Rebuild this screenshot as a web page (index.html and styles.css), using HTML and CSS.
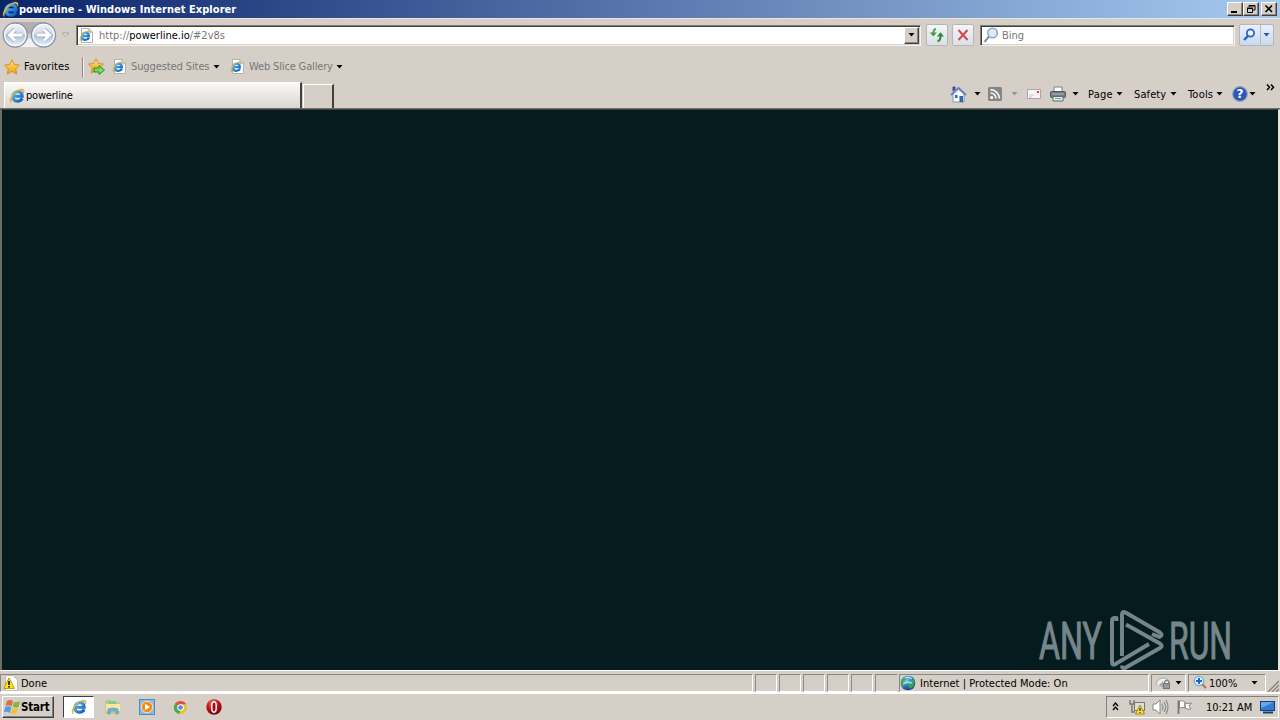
FILE: index.html
```html
<!DOCTYPE html>
<html lang="en">
<head>
<meta charset="utf-8">
<title>powerline - Windows Internet Explorer</title>
<link rel="stylesheet" href="styles.css">
</head>
<body>
<svg class="defs" width="0" height="0">
  <defs>
    <linearGradient id="blue" x1="0" y1="0" x2="1" y2="1"><stop offset="0" stop-color="#5cc0f8"/><stop offset="1" stop-color="#0f58b8"/></linearGradient>
    <linearGradient id="orb" x1="0" y1="0" x2="0" y2="1"><stop offset="0" stop-color="#f4f6fa"/><stop offset=".45" stop-color="#d3dae5"/><stop offset=".52" stop-color="#b3c2d8"/><stop offset="1" stop-color="#eef6fd"/></linearGradient>
    <radialGradient id="globe" cx=".35" cy=".3" r=".8"><stop offset="0" stop-color="#8fd4f4"/><stop offset=".5" stop-color="#2a78c4"/><stop offset="1" stop-color="#0c2f78"/></radialGradient>
    <radialGradient id="red" cx=".4" cy=".25" r=".8"><stop offset="0" stop-color="#f06a60"/><stop offset=".5" stop-color="#c01414"/><stop offset="1" stop-color="#6c0404"/></radialGradient>
    <linearGradient id="gold" x1="0" y1="0" x2="0" y2="1"><stop offset="0" stop-color="#ffe878"/><stop offset="1" stop-color="#f09a10"/></linearGradient>
  </defs>
  <symbol id="ie" viewBox="0 0 16 16">
    <path d="M13.2 10.4Q11.8 13.3 8.400 13.3Q4 13 3.800 8.800Q4.200 4.100 8.800 3.500Q13 3.700 13.2 8.300H5" fill="none" stroke="url(#blue)" stroke-width="3"/>
    <path d="M2.3 14.8C-1 13.6 2.2 5.8 8 2.6C11.8 .4 15.4 .4 15.2 3.4C15.1 4.2 14.8 4.8 14.4 5.4C14.6 2.2 12.2 1.9 9 3.1C4.6 5.4 1.6 11.6 2.3 14.8Z" fill="#e6c33f" stroke="#b9932a" stroke-width=".3"/>
  </symbol>
  <symbol id="iepage" viewBox="0 0 14 15">
    <path d="M2.5 .5H10L13.5 4V14.5H2.5Z" fill="#fff" stroke="#b0b0b0"/><path d="M10 .5V4H13.5" fill="#e4e4e4" stroke="#a8a8a8"/>
    <svg x="0" y="2" width="12" height="12"><use href="#ie"/></svg>
  </symbol>
  <symbol id="star" viewBox="0 0 16 16"><path d="M8 .7L10.3 5.4L15.5 6.1L11.7 9.7L12.7 15L8 12.4L3.3 15L4.3 9.7L.5 6.1L5.7 5.4Z" fill="url(#gold)" stroke="#d88a18" stroke-width=".9" stroke-linejoin="round"/></symbol>
  <symbol id="down" viewBox="0 0 7 4"><path d="M.5 0H6.5L3.5 3.5Z" fill="currentColor"/></symbol>
</svg>

<header class="titlebar">
  <svg class="title-icon"><use href="#ie"/></svg>
  <span class="title-text">powerline - Windows Internet Explorer</span>
  <div class="window-buttons">
    <span class="winbtn"><svg width="12" height="10"><path d="M2 8H8" stroke="#000" stroke-width="2"/></svg></span>
    <span class="winbtn"><svg width="12" height="10"><path d="M4 1.5H10V6H8M4 1.5V3M4 2H10M2.5 4.5H7.5V8.5H2.5ZM2 4H8" fill="none" stroke="#000"/></svg></span>
    <span class="winbtn close"><svg width="12" height="10"><path d="M2.5 1.5L9 8M9 1.5L2.5 8" stroke="#000" stroke-width="1.6"/></svg></span>
  </div>
</header>

<nav class="address-row">
  <svg class="backforward" viewBox="0 0 58 28">
    <path d="M13 1H43L49 6L28 13L7 6Z" fill="#b3afb0"/>
    <path d="M9 26H47L29 17Z" fill="#f1f1f3"/>
    <circle cx="14.2" cy="14" r="12" fill="url(#orb)" stroke="#8695a9" stroke-width="1.4"/>
    <circle cx="42.5" cy="14" r="12" fill="url(#orb)" stroke="#8695a9" stroke-width="1.4"/>
    <circle cx="14.2" cy="14" r="10.6" fill="none" stroke="#f7fafd" stroke-width="1.2"/>
    <circle cx="42.5" cy="14" r="10.6" fill="none" stroke="#f7fafd" stroke-width="1.2"/>
    <path d="M14 8.5L8.5 14L14 19.5M9 14H21" fill="none" stroke="#9dafc8" stroke-width="4.6"/>
    <path d="M14 8.5L8.5 14L14 19.5M9 14H21" fill="none" stroke="#fff" stroke-width="3"/>
    <path d="M43 8.5L48.5 14L43 19.5M48 14H36" fill="none" stroke="#9dafc8" stroke-width="4.6"/>
    <path d="M43 8.5L48.5 14L43 19.5M48 14H36" fill="none" stroke="#fff" stroke-width="3"/>
  </svg>
  <svg class="history" viewBox="0 0 9 6"><path d="M1 1H8L4.5 4.5Z" fill="#dedbd5" stroke="#aaa7a2"/></svg>
  <div class="field address">
    <svg class="i14"><use href="#iepage"/></svg>
    <span class="url">http://<b>powerline.io</b>/#2v8s</span>
    <span class="combo"><svg class="arrow"><use href="#down"/></svg></span>
  </div>
  <span class="tool refresh"><svg width="16" height="16"><path d="M7 2Q4.3 2 4.3 7" fill="none" stroke="#4aa84c" stroke-width="2"/><path d="M.8 5.5H7.8L4.3 9.5Z" fill="#36a23a"/><path d="M8.5 14Q11.5 14 11.5 9" fill="none" stroke="#268b2d" stroke-width="2"/><path d="M8 9.5H15L11.5 5.3Z" fill="#268b2d"/></svg></span>
  <span class="tool stop"><svg width="16" height="16"><path d="M3.5 3L12.5 13M12.5 3L3.5 13" stroke="#cf4a4f" stroke-width="2"/></svg></span>
  <div class="field search">
    <svg width="16" height="16"><circle cx="9.5" cy="6" r="4.8" fill="#dceafa" stroke="#91a5c4" stroke-width="1.5"/><path d="M6 9.5L1.5 15" stroke="#8293ad" stroke-width="2"/></svg>
    <span class="hint">Bing</span>
  </div>
  <div class="tool searchgo">
    <svg width="18" height="16"><circle cx="10.5" cy="6" r="3.6" fill="#eaf4ff" stroke="#2b63cb" stroke-width="1.8"/><path d="M8 8.8L4 13" stroke="#2b63cb" stroke-width="2.4"/></svg>
    <i class="split"></i><svg class="arrow smallblue"><use href="#down"/></svg>
  </div>
</nav>

<nav class="favorites-row">
  <svg class="i16"><use href="#star"/></svg><span class="fav-label">Favorites</span>
  <i class="separator"></i>
  <svg class="addfav" viewBox="0 0 18 17"><svg width="16" height="16"><use href="#star"/></svg><path d="M6 10H11V7.5L16.5 12L11 16.5V14H6Z" fill="#75d85b" stroke="#26932b"/></svg>
  <svg class="i14"><use href="#iepage"/></svg><span class="suggested muted">Suggested Sites</span><svg class="arrow"><use href="#down"/></svg>
  <svg class="i14 slice"><use href="#iepage"/></svg><span class="gallery muted">Web Slice Gallery</span><svg class="arrow"><use href="#down"/></svg>
</nav>

<section class="tab-row">
  <div class="tab"><svg class="i16"><use href="#ie"/></svg><span class="tab-text">powerline</span></div>
  <div class="new-tab"></div>
  <div class="commands">
    <svg class="home" viewBox="0 0 17 17"><path d="M3 8V16H14V8L8.5 3Z" fill="#f4f8ff" stroke="#8295b8"/><path d="M3 5V1H5V4" fill="#405abd" stroke="#3347a0"/><path d="M1 9L8.5 2L16 9" fill="none" stroke="#6b7dc4" stroke-width="1.8"/><path d="M9.5 10H13V16H9.5Z" fill="#2e6d9e"/><path d="M5 9H7.5V12H5Z" fill="#3568ad"/></svg>
    <svg class="arrow a1"><use href="#down"/></svg>
    <svg class="rss" viewBox="0 0 14 14"><rect width="14" height="14" rx="1.5" fill="#858585"/><circle cx="3.7" cy="10.5" r="1.5" fill="#fff"/><path d="M2.5 6A5.5 5.5 0 0 1 8 11.5M2.5 2.7A9 9 0 0 1 11.4 11.5" fill="none" stroke="#f4f4f4" stroke-width="1.7"/></svg>
    <svg class="arrow a2"><use href="#down"/></svg>
    <svg class="mail" viewBox="0 0 14 10"><rect x=".5" y=".5" width="13" height="9" fill="#f7f5fa" stroke="#aaa5ae"/><path d="M2 6H7M2 8H5" stroke="#c5c2cd"/><path d="M10 2H12V4H10Z" fill="#cf3640"/></svg>
    <svg class="printer" viewBox="0 0 16 16"><path d="M4 1H12V7H4Z" fill="#fff" stroke="#7c8084"/><rect x=".5" y="5.5" width="15" height="6" rx="1" fill="#777b80" stroke="#54585d"/><path d="M2 8H14" stroke="#b7b9bb"/><path d="M3 10.5H13V15H3Z" fill="#e1eef0" stroke="#63676a"/><path d="M5 12.5H11" stroke="#65a8ac"/></svg>
    <svg class="arrow a3"><use href="#down"/></svg>
    <span class="page">Page</span><svg class="arrow"><use href="#down"/></svg>
    <span class="safety">Safety</span><svg class="arrow"><use href="#down"/></svg>
    <span class="tools">Tools</span><svg class="arrow"><use href="#down"/></svg>
    <svg class="help" viewBox="0 0 16 16"><circle cx="8" cy="8" r="7.3" fill="#2b57b6" stroke="#909bb5" stroke-width="1.2"/><text x="8" y="12.3" text-anchor="middle" class="question">?</text></svg><svg class="arrow a4"><use href="#down"/></svg>
    <svg class="chevron" viewBox="0 0 9 7"><path d="M1 .5L3.5 3.3L1 6M5 .5L7.5 3.3L5 6" fill="none" stroke="#000" stroke-width="1.5"/></svg>
  </div>
</section>

<main class="viewport">
  <svg class="watermark" viewBox="0 0 200 62">
    <g class="brand"><text x="3" y="50.5" textLength="63" lengthAdjust="spacingAndGlyphs">ANY</text><text x="133" y="50.5" textLength="63" lengthAdjust="spacingAndGlyphs">RUN</text></g>
    <g fill="none" stroke="#77868a" stroke-width="3.9" stroke-linejoin="round">
      <path d="M80.5 13V10H79Q76 10 76 13V54Q76 58 79.5 56L113 36"/>
      <path d="M86 48V6.5Q86 3 89.5 4.5L124 24.5Q127.5 27.5 123.5 29L116 26"/>
      <path d="M90 16.5L124 35.5Q127.5 38 124 40L89 60Q86 61.5 86 57.5"/>
    </g>
  </svg>
</main>

<footer class="statusbar">
  <div class="pane done"><svg class="warn" viewBox="0 0 15 16"><path d="M2.5 .5H10L14.5 5V15.5H2.5Z" fill="#fff" stroke="#bbb"/><path d="M6 3L.7 13.4H11.5Z" fill="#ffe51f" stroke="#c19700"/><path d="M6 6V10M6 11V12.5" stroke="#000" stroke-width="1.5"/></svg><span class="done-text">Done</span></div>
  <div class="pane mini"></div><div class="pane mini"></div><div class="pane mini"></div><div class="pane mini"></div><div class="pane mini"></div><div class="pane mini last"></div>
  <div class="pane zone"><svg class="i16" viewBox="0 0 16 16"><circle cx="8" cy="8" r="7.3" fill="url(#globe)"/><path d="M2 4Q6 0 8 2L6 5L3 7L5 9L4 13Q1 10 1 7ZM9 6L14 4Q16 8 13 12L10 14L8 10Z" fill="#3daa4d" opacity=".85"/><path d="M5 3Q9 1 12 4M3 9Q7 6 12 8" fill="none" stroke="#a6def4" stroke-width="1.4"/></svg><span class="zone-text">Internet | Protected Mode: On</span></div>
  <div class="pane privacy"><svg width="18" height="16"><path d="M1 10Q2 4 7 3Q12 2 14 8" fill="#eee" stroke="#a7a7a7"/><path d="M4 10L8 6V13Z" fill="#aaa"/><path d="M9.5 9V7Q12 3.5 14 7V9" fill="none" stroke="#808080" stroke-width="1.3"/><rect x="8.5" y="8.5" width="6" height="5" fill="#999" stroke="#777"/></svg><svg class="arrow"><use href="#down"/></svg></div>
  <div class="pane zoom"><svg width="16" height="16"><circle cx="6" cy="6" r="4.7" fill="#dff1ff" stroke="#78a9dc" stroke-width="1.3"/><path d="M6 3V9M3 6H9" stroke="#176ac2" stroke-width="2"/><path d="M9.5 9.5L13 13" stroke="#b77549" stroke-width="2.2"/></svg><span class="zoom-text">100%</span><svg class="arrow"><use href="#down"/></svg></div>
  <svg class="grip" viewBox="0 0 12 12"><path d="M1 12L12 1M5 12L12 5M9 12L12 9" stroke="#858078" stroke-width="1.3"/></svg>
</footer>

<footer class="taskbar">
  <button class="start"><svg width="17" height="16"><path d="M3 2Q6 0 9 2L7.5 7.5Q5 5.5 1.5 7Z" fill="#e7693e"/><path d="M10 3Q13 4 16 2L14.5 8Q12 9 8.8 7.5Z" fill="#7bb947"/><path d="M1.2 8Q5 6.5 7.3 8.5L5.8 14Q3 12 0 13Z" fill="#4b9fe5"/><path d="M8.5 8.8Q11.5 10.3 14.2 9L12.5 14.5Q9.5 15.5 7 14.3Z" fill="#f2bf37"/></svg><span class="start-text">Start</span></button>
  <div class="active-app"><svg class="i16"><use href="#ie"/></svg></div>
  <svg class="explorer" viewBox="0 0 16 16"><path d="M1 2H6L7 4H14V14H1Z" fill="#e7cc67" stroke="#d2b555"/><path d="M3 2H11V6H3Z" fill="#75cf9a"/><path d="M1 5H15V12H1Z" fill="#f7e7a0"/><path d="M3 15V10Q8 8 13 10V15H11V12H5V15Z" fill="#6db5e2" stroke="#5098c7" stroke-width=".7"/></svg>
  <svg class="media" viewBox="0 0 16 16"><rect x=".5" y=".5" width="15" height="15" fill="#8bbce8" stroke="#4c8bc6"/><circle cx="8" cy="8" r="5.6" fill="#f28c17" stroke="#fde0ad"/><path d="M6 4.8L11 8L6 11.2Z" fill="#fff"/></svg>
  <svg class="chrome" viewBox="0 0 16 16"><circle cx="8" cy="8" r="7" fill="#e7c633"/><path d="M8 8L2 4.3A7 7 0 0 1 14 4.5H8Z" fill="#dc5044"/><path d="M2 4.3L8 8L7 15A7 7 0 0 1 2 4.3Z" fill="#45a85a"/><circle cx="8" cy="8" r="3.5" fill="#fff"/><circle cx="8" cy="8" r="2.5" fill="#508cda"/></svg>
  <svg class="opera" viewBox="0 0 16 16"><circle cx="8" cy="8" r="7.7" fill="url(#red)"/><ellipse cx="8" cy="8" rx="2.3" ry="5.2" fill="#a50b12" stroke="#fff" stroke-width="1.5"/></svg>
  <div class="tray">
    <svg class="trayup" viewBox="0 0 7 9"><path d="M1 4L3.5 1L6 4M1 8L3.5 5L6 8" fill="none" stroke="#000" stroke-width="1.3"/></svg>
    <svg class="network" viewBox="0 0 17 16"><path d="M1 1V5H5V1M3 5V13H6" fill="none" stroke="#777" stroke-width="1.4"/><rect x="5.5" y="3.5" width="10" height="8" fill="#ddd" stroke="#777"/><path d="M11 6L6.5 15H15.5Z" fill="#ffe335" stroke="#a58a11"/><path d="M11 9V12M11 13V14" stroke="#000"/></svg>
    <svg class="sound" viewBox="0 0 17 16"><path d="M1 5H4L8 1V15L4 11H1Z" fill="#fff" stroke="#888"/><path d="M10 5Q12 8 10 11M12 3Q15.5 8 12 13M14 1Q18 8 14 15" fill="none" stroke="#8a8a8a" stroke-width="1.1"/></svg>
    <svg class="flag" viewBox="0 0 17 16"><path d="M2.5 15V1.5" stroke="#777" stroke-width="1.8"/><path d="M3.5 2Q7 1 9 3V9Q7 8 3.5 9ZM9 4Q12 5 15.5 4L13 7L15 10Q12 11 9 9Z" fill="#fff" stroke="#858585"/></svg>
    <span class="clock">10:21 AM</span>
    <svg class="desktop" viewBox="0 0 15 13"><rect x=".5" y=".5" width="14" height="9" fill="#337bd2" stroke="#153d82"/><path d="M1 1H14L1 7Z" fill="#66a8ed"/><path d="M3 11.5H13" stroke="#193e73" stroke-width="2"/></svg>
  </div>
</footer>
</body>
</html>
```

FILE: styles.css
```css
* { box-sizing: border-box; }
body { margin: 0; width: 1280px; height: 720px; overflow: hidden; background: #d5cfc7; color: #000; font: 11px/14px "DejaVu Sans Condensed", "DejaVu Sans", sans-serif; font-stretch: condensed; display: flex; flex-direction: column; }
.defs { position: absolute; }
svg { flex: none; display: block; }
span { white-space: nowrap; flex: none; }
.i16 { width: 16px; height: 16px; }
.i14 { width: 14px; height: 15px; }
.arrow { width: 7px; height: 4px; }

.titlebar { height: 18px; flex: none; display: flex; align-items: center; padding-left: 2px; background: linear-gradient(90deg, #0a246a, #a6caf0); color: #fff; }
.title-icon { width: 17px; height: 17px; }
.title-text { font-weight: bold; width: 1208px; padding-top: 1px; letter-spacing: .04px; }
.window-buttons { display: flex; }
.winbtn { width: 16px; height: 14px; padding: 1px; background: #d5cfc7; border: 1px solid; border-color: #fff #404040 #404040 #fff; box-shadow: inset -1px -1px #888; }
.close { margin-left: 2px; }

.address-row { height: 35px; flex: none; display: flex; align-items: center; padding: 0 0 2px 1px; border-top: 1px solid #e8e4de; }
.backforward { width: 58px; height: 28px; }
.history { width: 9px; height: 6px; margin: 0 6px 0 2px; }
.field { height: 21px; display: flex; align-items: center; background: #fff; border: 1px solid; border-color: #7f7c76 #f4f2ee #f4f2ee #7f7c76; box-shadow: inset 1px 1px #404040, inset -1px -1px #d5cfc7; }
.address { width: 845px; padding: 2px; }
.url { margin-left: 6px; width: 805px; color: #777; padding-top: 2px; }
.url b { color: #000; font-weight: normal; }
.combo { width: 15px; height: 17px; display: grid; place-items: center; background: #d5cfc7; border: 1px solid; border-color: #fff #404040 #404040 #fff; box-shadow: inset -1px -1px #888; }
.tool { width: 22px; height: 22px; display: flex; align-items: center; justify-content: center; background: linear-gradient(#f4f5f9, #dedfe5); border: 1px solid #b2b6be; border-radius: 2px; }
.refresh { margin-left: 5px; }
.stop { margin-left: 4px; }
.search { width: 255px; margin-left: 6px; padding-left: 2px; }
.hint { color: #777; margin-left: 3px; padding-top: 2px; }
.searchgo { width: 35px; margin-left: 4px; justify-content: flex-start; background: linear-gradient(#e9f0fb, #cbd9ee); }
.split { width: 1px; height: 20px; margin-left: 2px; background: #aeb9ca; }
.smallblue { margin-left: 2px; color: #245a9f; }

.favorites-row { height: 27px; flex: none; display: flex; align-items: center; padding-left: 4px; }
.fav-label { width: 58px; margin-left: 4px; letter-spacing: .1px; }
.separator { height: 20px; width: 2px; border-left: 1px solid #8e8a84; border-right: 1px solid #f3f0ea; }
.addfav { width: 18px; height: 17px; margin: 0 6px 0 4px; }
.suggested { width: 82px; margin-left: 5px; padding-top: 1px; letter-spacing: -.1px; }
.gallery { width: 87px; margin-left: 5px; padding-top: 1px; letter-spacing: -.15px; }
.muted { color: #777; }
.slice { margin-left: 10px; }

.tab-row { height: 29px; flex: none; display: flex; padding-left: 4px; border-bottom: 1px solid #706d68; }
.tab { margin-top: 2px; width: 298px; height: 26px; display: flex; align-items: center; padding: 1px 0 0 4px; background: linear-gradient(#fbfaf8, #d9d5cf); border: 1px solid #fff; border-right: 2px solid #404040; border-bottom: 0; }
.tab-text { margin-left: 1px; letter-spacing: -.2px; }
.new-tab { width: 31px; height: 24px; margin: 4px 0 0 1px; border: 1px solid #fff; border-right: 2px solid #404040; border-bottom: 0; }
.commands { height: 28px; display: flex; align-items: center; margin-left: 616px; }
.commands span { padding-top: 1px; }
.home { width: 17px; height: 17px; }
.a1 { margin: 0 7px 0 7px; }
.rss { width: 14px; height: 14px; }
.a2 { margin: 0 9px 0 9px; color: #98948d; }
.mail { width: 14px; height: 10px; }
.printer { width: 16px; height: 16px; margin-left: 9px; }
.a3 { margin: 0 9px 0 6px; }
.page { width: 28px; letter-spacing: .2px; }
.safety { width: 36px; margin-left: 11px; letter-spacing: .1px; }
.tools { width: 28px; margin-left: 11px; letter-spacing: .2px; }
.help { width: 16px; height: 16px; margin-left: 9px; }
.question { font: bold 12px "DejaVu Sans", sans-serif; fill: #fff; }
.a4 { margin-left: 1px; }
.chevron { width: 9px; height: 7px; margin: 0 0 13px 10px; }

.viewport { height: 561px; flex: none; display: flex; justify-content: flex-end; align-items: flex-end; padding: 0 42px 0 0; background: #041c1e; border: 1px solid #404040; border-left: 2px solid #706d68; border-right: 2px solid #e7e3dd; border-bottom: 0; }
.watermark { width: 200px; height: 62px; overflow: visible; }
.brand { font: 52px Roboto, sans-serif; fill: #77868a; stroke: #77868a; stroke-width: 1.1px; }

.statusbar { height: 24px; flex: none; display: flex; padding-top: 3px; border-top: 1px solid #fff; border-bottom: 2px solid #fff; }
.pane { height: 18px; display: flex; align-items: center; border: 1px solid; border-color: #8b8781 #fff #fff #8b8781; flex: none; }
.pane span { padding-top: 2px; }
.done { width: 753px; padding-left: 2px; }
.warn { width: 15px; height: 16px; }
.done-text { margin-left: 3px; }
.mini { width: 22px; margin-left: 2px; }
.last { border-right: 0; }
.zone { width: 250px; margin-left: 2px; }
.zone-text { margin-left: 4px; letter-spacing: .03px; }
.privacy { width: 35px; margin-left: 2px; padding-left: 3px; }
.privacy .arrow { margin-left: 2px; }
.zoom { width: 78px; margin-left: 2px; padding-left: 4px; }
.zoom-text { width: 42px; margin-left: 0; }
.grip { width: 12px; height: 12px; margin: 6px 0 0 1px; }

.taskbar { height: 26px; flex: none; display: flex; align-items: center; padding-left: 2px; }
.start { width: 52px; height: 22px; display: flex; align-items: center; padding: 0 1px; font: bold 11.5px/16px "DejaVu Sans Condensed", sans-serif; font-stretch: condensed; letter-spacing: -.2px; background: #d5cfc7; color: #000; border: 1px solid; border-color: #fff #404040 #404040 #fff; box-shadow: inset -1px -1px #858078; }
.active-app { width: 31px; height: 22px; margin-left: 9px; display: grid; place-items: center; background: #fff; border: 1px solid; border-color: #404040 #fff #fff #404040; }
.explorer { width: 16px; height: 16px; margin-left: 11px; }
.media { width: 16px; height: 16px; margin-left: 18px; }
.chrome { width: 15px; height: 15px; margin-left: 18px; }
.opera { width: 16px; height: 16px; margin-left: 18px; }
.tray { width: 173px; height: 22px; margin-left: 884px; display: flex; align-items: center; padding-left: 5px; border: 1px solid; border-color: #858078 #fff #fff #858078; }
.trayup { width: 7px; height: 9px; margin-bottom: 2px; }
.network { width: 17px; height: 16px; margin-left: 10px; }
.sound { width: 17px; height: 16px; margin-left: 6px; }
.flag { width: 17px; height: 16px; margin-left: 7px; }
.clock { width: 47px; margin-left: 13px; padding-top: 1px; letter-spacing: -.1px; }
.desktop { width: 15px; height: 13px; margin-left: 7px; }
```
